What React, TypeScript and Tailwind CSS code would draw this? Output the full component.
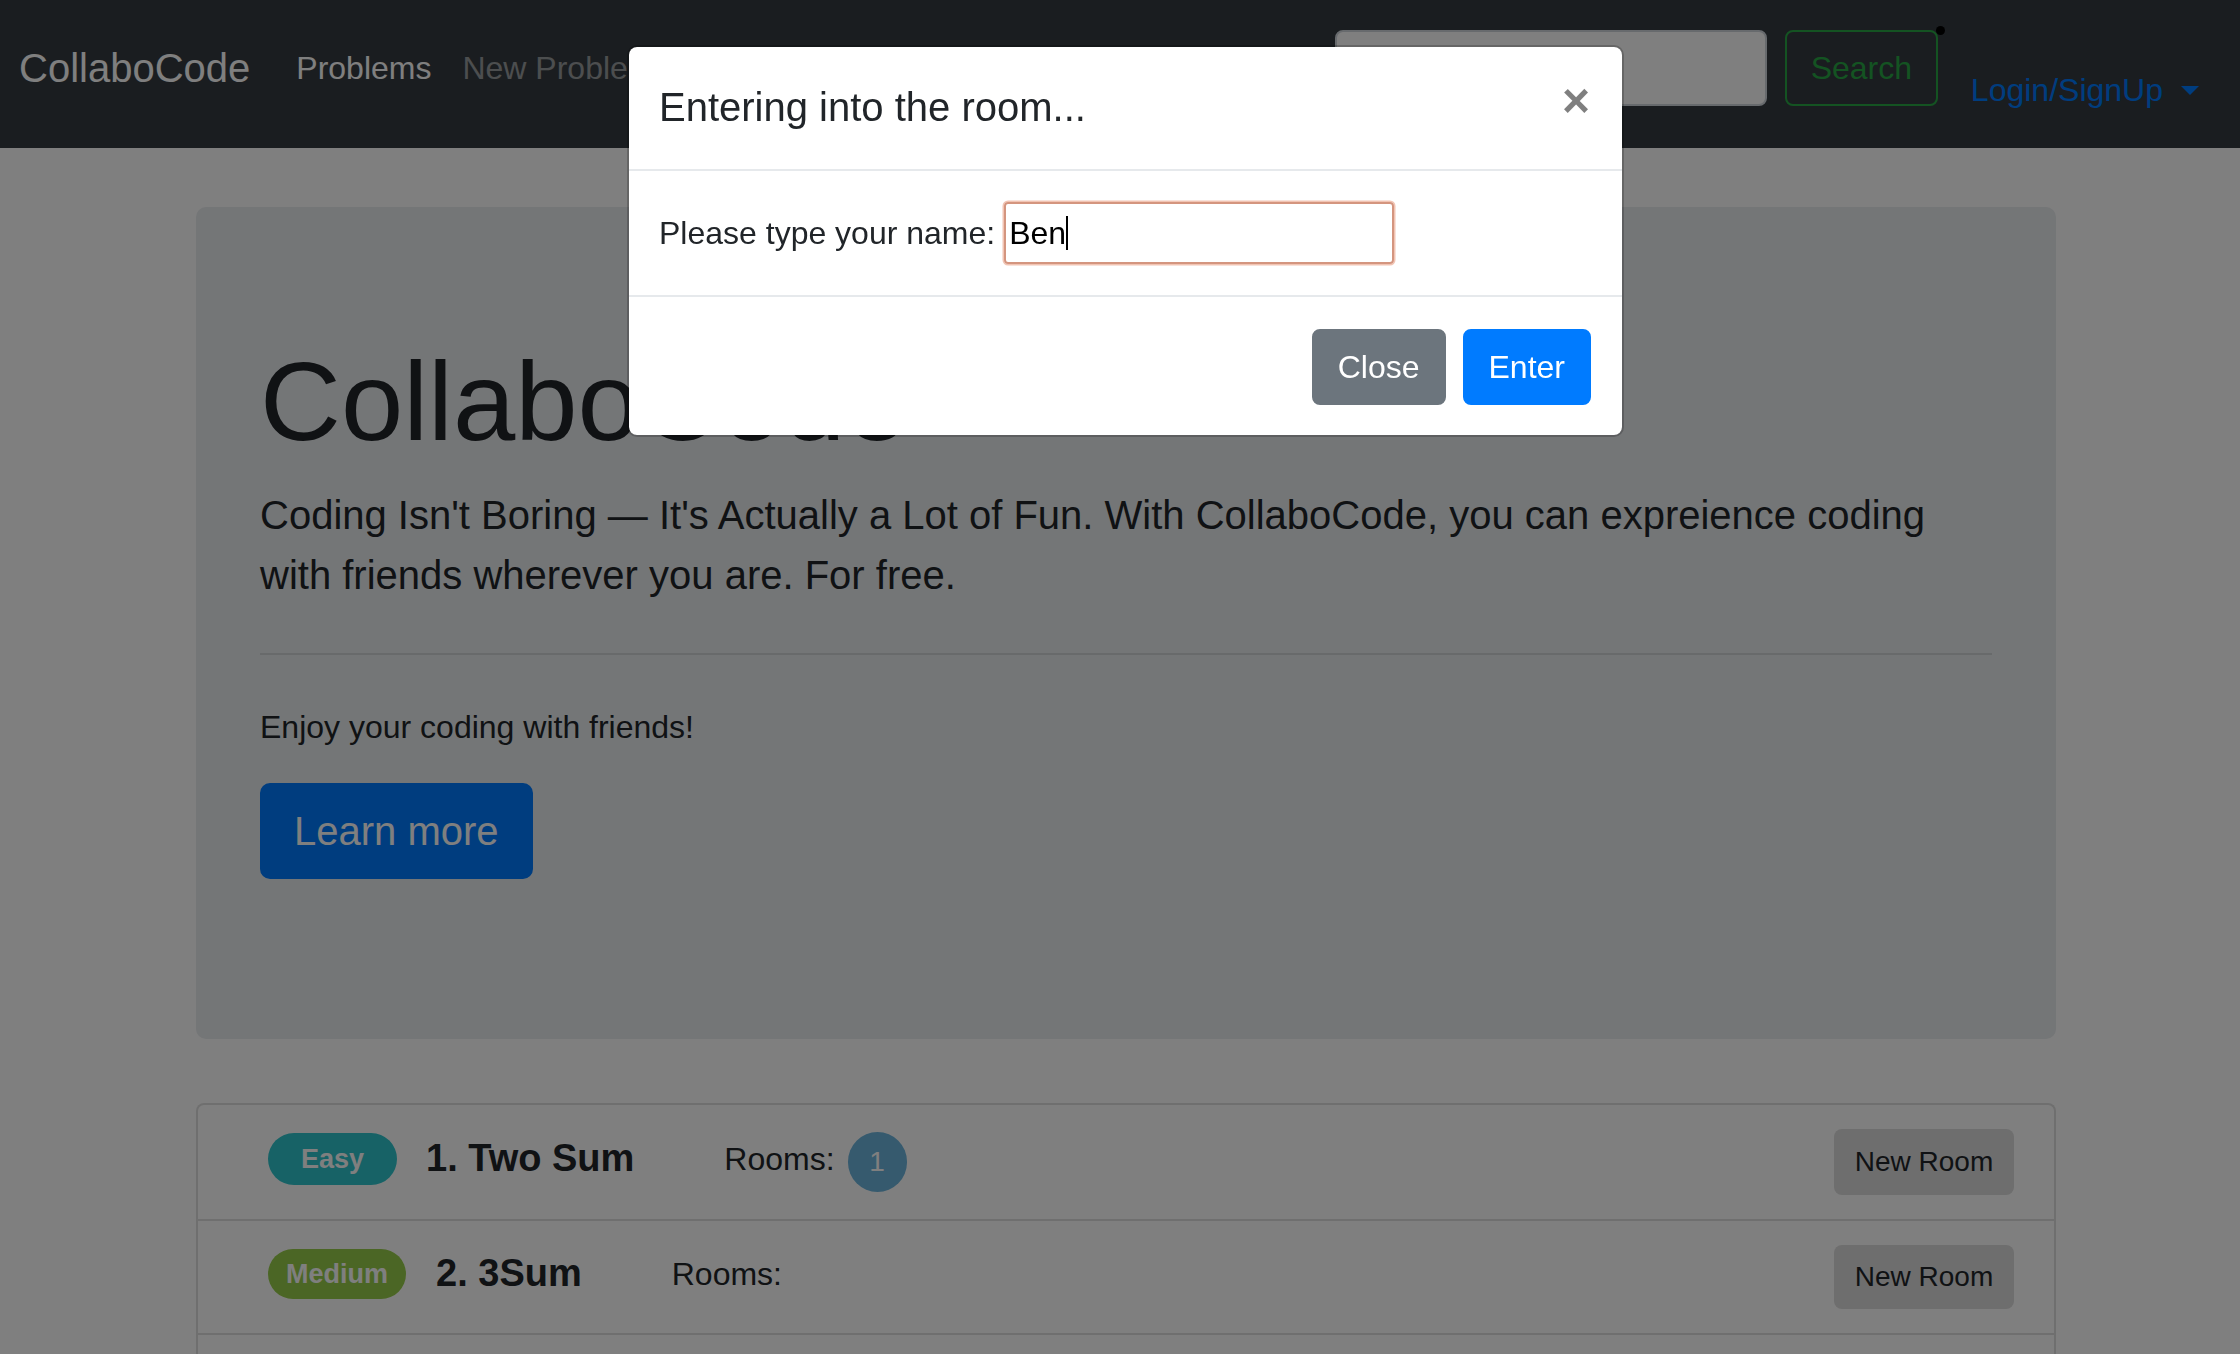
export default function App() {
  return (
    <div className="relative h-[1354px] w-[2240px] overflow-hidden bg-white text-[#212529] font-['Liberation_Sans',Arial,sans-serif]">
      {/* Navbar */}
      <nav className="flex h-[148px] items-start bg-[#343a40] pl-[19px] pr-[41px]">
        <a className="mt-[38px] text-[40px] leading-[60px] text-white">CollaboCode</a>
        <ul className="ml-[46px] mt-[44px] flex gap-[31px] text-[32px] leading-[48px]">
          <li className="text-white">Problems</li>
          <li className="text-white/50">New Problem</li>
        </ul>
        <div className="ml-auto mt-[30px] flex">
          <div className="h-[76px] w-[432px] rounded-[8px] border-2 border-[#ced4da] bg-white" />
          <button className="relative ml-[18px] flex h-[76px] w-[153px] items-center justify-center rounded-[8px] border-2 border-[#28a745] text-[32px] text-[#28a745]">
            Search
            <span className="absolute -right-[9px] -top-[6px] h-[9px] w-[9px] rounded-full bg-black" />
          </button>
        </div>
        <div className="ml-[33px] mt-[66px] flex items-center text-[32px] leading-[48px] text-[#007bff]">
          <span>Login/SignUp</span>
          <span className="ml-[18px] h-0 w-0 border-x-[9.6px] border-t-[9.6px] border-x-transparent border-t-[#007bff]" />
        </div>
      </nav>

      {/* Main container */}
      <div className="ml-[196px] mt-[59px] w-[1860px]">
        <div className="mb-[64px] rounded-[10px] bg-[#e9ecef] px-[64px] py-[128px]">
          <h1 className="mb-[16px] text-[112px] font-light leading-[134.4px]">CollaboCode</h1>
          <p className="text-[40px] font-light leading-[60px]">
            Coding Isn't Boring — It's Actually a Lot of Fun. With CollaboCode, you can expreience coding with friends wherever you are. For free.
          </p>
          <hr className="my-[48px] border-0 border-t-2 border-black/10" />
          <p className="mb-[32px] text-[32px] leading-[48px]">Enjoy your coding with friends!</p>
          <div className="mb-[32px] flex">
            <a className="flex h-[96px] items-center rounded-[10px] border-2 border-[#007bff] bg-[#007bff] px-[32px] text-[40px] text-white">
              Learn more
            </a>
          </div>
        </div>

        <div className="rounded-t-[8px] border-x-2 border-t-2 border-[#dfdfdf] bg-white">
          {/* Row 1 */}
          <div className="flex items-center border-b-2 border-[#dfdfdf] py-[24px] pl-[70px] pr-[40px]">
            <div className="flex h-[66px] items-center pb-[7px]">
              <span className="flex h-[52px] w-[129px] items-center justify-center rounded-full bg-[#2ec4cc] text-[27px] font-bold text-white">Easy</span>
              <span className="ml-[29px] text-[38px] font-bold">1. Two Sum</span>
              <span className="ml-[90px] text-[32px]">Rooms:</span>
              <span className="ml-[13px] mt-[7px] flex h-[60px] w-[59px] items-center justify-center rounded-full bg-[#6cb4dc] text-[28px] text-white">1</span>
            </div>
            <button className="ml-auto flex h-[66px] w-[180px] items-center justify-center rounded-[8px] bg-[#dcdcdc] text-[28px] text-[#212529]">New Room</button>
          </div>
          {/* Row 2 */}
          <div className="flex items-center border-b-2 border-[#dfdfdf] py-[24px] pl-[70px] pr-[40px]">
            <div className="flex h-[64px] items-center pb-[7px]">
              <span className="flex h-[50px] w-[138px] items-center justify-center rounded-full bg-[#96cc4a] text-[27px] font-bold text-white">Medium</span>
              <span className="ml-[30px] text-[38px] font-bold">2. 3Sum</span>
              <span className="ml-[90px] text-[32px]">Rooms:</span>
            </div>
            <button className="ml-auto flex h-[64px] w-[180px] items-center justify-center rounded-[8px] bg-[#dcdcdc] text-[28px] text-[#212529]">New Room</button>
          </div>
          {/* Row 3 (below the fold) */}
          <div className="h-[112px] border-b-2 border-[#dfdfdf]" />
        </div>
      </div>

      {/* Modal backdrop + dialog */}
      <div className="fixed inset-0 bg-black/50">
        <div className="ml-[627px] mt-[45px] w-[997px] rounded-[10px] border-2 border-black/20 bg-white bg-clip-padding">
          <div className="flex items-start justify-between border-b-2 border-[#e6e9ec] px-[30px] pb-[32px] pt-[30px]">
            <h5 className="text-[40px] leading-[60px] text-[#212529]">Entering into the room...</h5>
            <span className="mr-[2px] text-[48px] font-bold leading-none text-black/50">×</span>
          </div>
          <div className="flex items-center px-[30px] py-[31px] text-[32px] text-[#212529]">
            <span>Please type your name:</span>
            <div className="ml-[9px] flex h-[62px] w-[390px] items-center rounded-[4px] border-2 border-[#d4957f] px-[3px] text-[32px] text-black shadow-[0_0_0_1.5px_#f2c4b3]">
              <span>Ben</span>
              <span className="h-[34px] w-[2px] bg-black" />
            </div>
          </div>
          <div className="flex justify-end gap-[17px] border-t-2 border-[#e6e9ec] pb-[30px] pr-[31px] pt-[32px]">
            <button className="flex h-[76px] items-center rounded-[8px] border-2 border-[#6c757d] bg-[#6c757d] px-[24px] text-[32px] text-white">Close</button>
            <button className="flex h-[76px] items-center rounded-[8px] border-2 border-[#007bff] bg-[#007bff] px-[24px] text-[32px] text-white">Enter</button>
          </div>
        </div>
      </div>
    </div>
  );
}
